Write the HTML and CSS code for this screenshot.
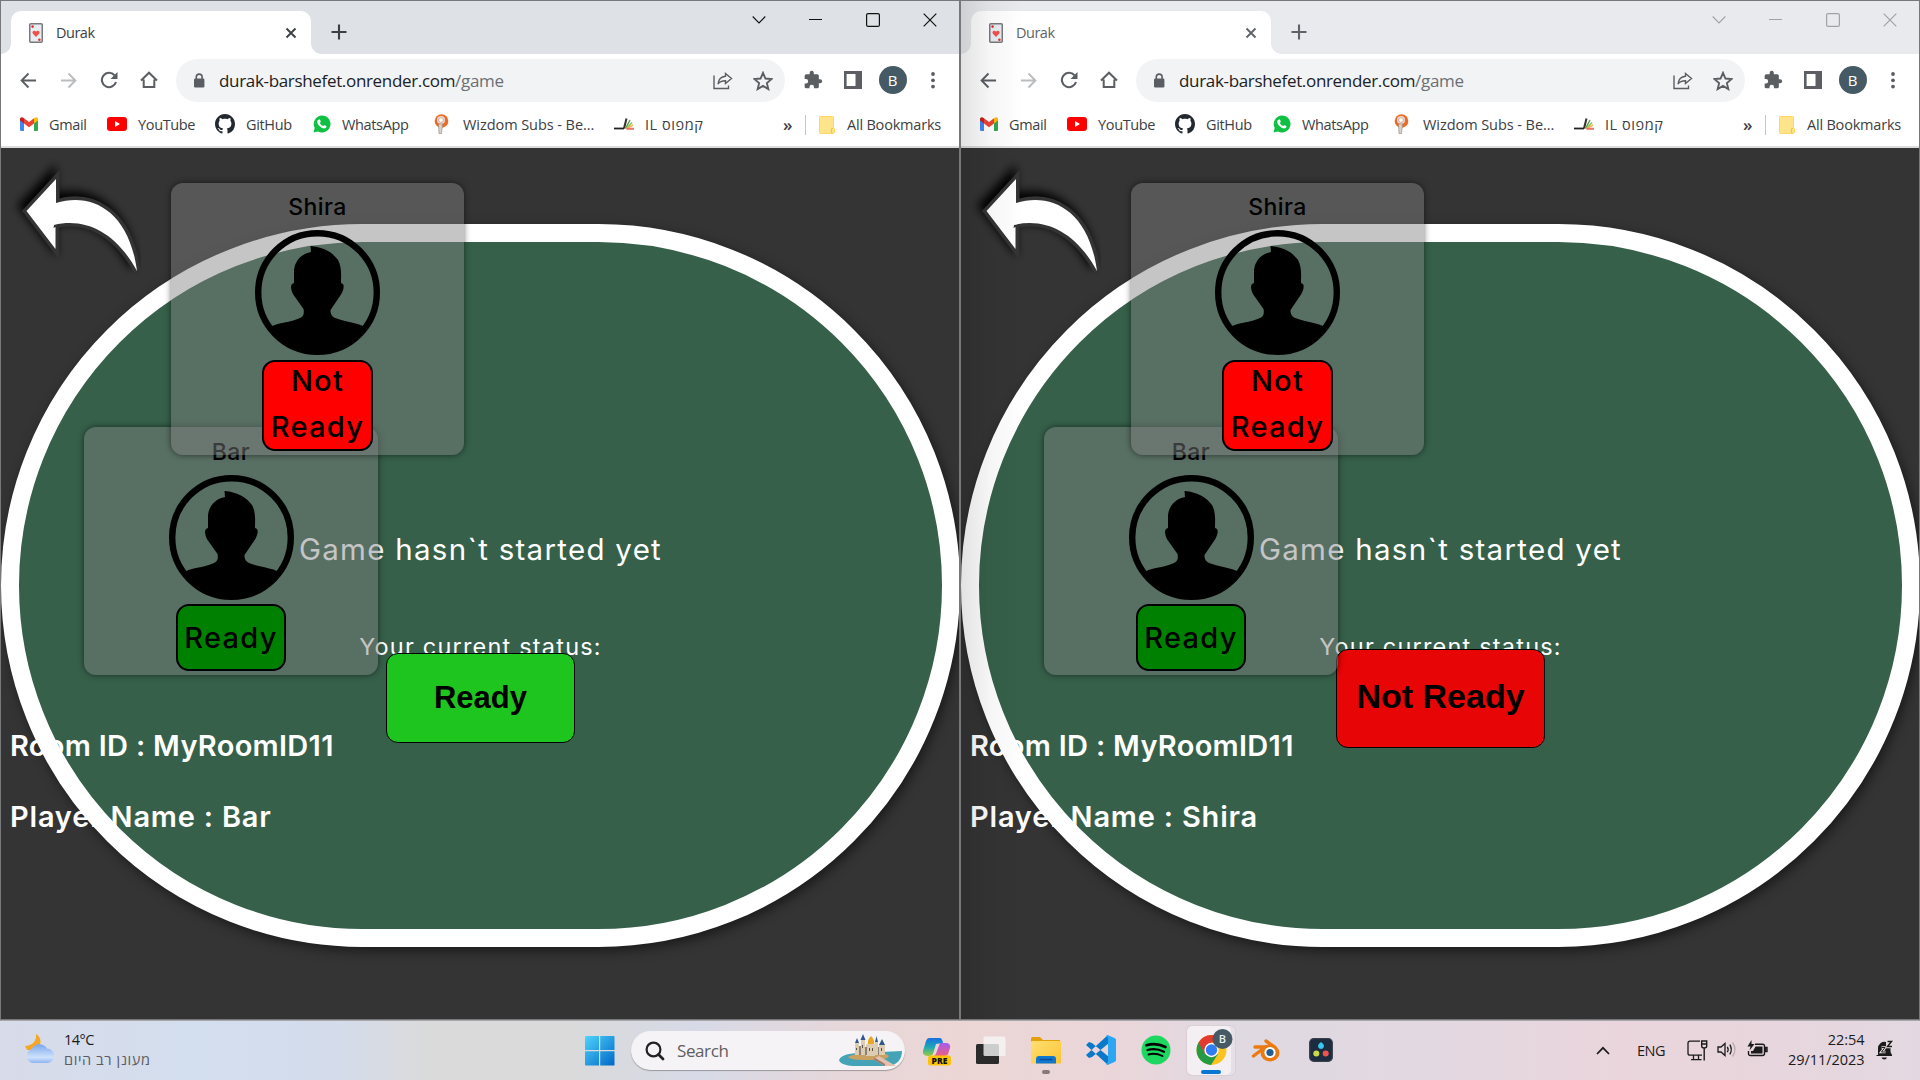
FILE: index.html
```html
<!DOCTYPE html>
<html lang="en">
<head>
<meta charset="utf-8">
<title>Durak</title>
<link rel="stylesheet" href="styles.css">
</head>
<body>
<svg class="defs" aria-hidden="true">
  <defs>
    <filter id="soft" x="-30%" y="-30%" width="160%" height="160%"><feGaussianBlur stdDeviation="5"/></filter>
    <linearGradient id="win" x1="0" y1="0" x2="1" y2="1"><stop offset="0" stop-color="#4fd3fb"/><stop offset="1" stop-color="#0067c8"/></linearGradient>
    <linearGradient id="cloudg" x1="0" y1="0" x2="0" y2="1"><stop offset="0" stop-color="#7ba7ef"/><stop offset=".7" stop-color="#cfe2fb"/><stop offset="1" stop-color="#8fb4f2"/></linearGradient>
    <linearGradient id="foldg" x1="0" y1="0" x2="1" y2="1"><stop offset="0" stop-color="#ffdf74"/><stop offset="1" stop-color="#fcc431"/></linearGradient>
    <linearGradient id="copa" x1="0" y1="0" x2="0" y2="1"><stop offset="0" stop-color="#1b6fe0"/><stop offset=".5" stop-color="#1aa6b8"/><stop offset="1" stop-color="#9ccb3b"/></linearGradient>
    <linearGradient id="copb" x1="0" y1="0" x2="0" y2="1"><stop offset="0" stop-color="#a45bf0"/><stop offset="1" stop-color="#f0607e"/></linearGradient>
  </defs>
  <symbol id="card" viewBox="0 0 14 20"><rect x=".75" y=".75" width="12.5" height="18.5" rx="1" fill="#e8edf2" stroke="#77797c" stroke-width="1.5"/><path d="M7 14 3.7 10.6A1.9 1.9 0 0 1 7 8.700a1.900 1.900 0 0 1 3.300 1.900Z" fill="#f0504c"/><circle cx="3.600" cy="3.600" r="1.300" fill="#d33"/><circle cx="10.400" cy="16.800" r="1.300" fill="#d33"/></symbol>
  <symbol id="x" viewBox="0 0 12 12"><path d="M1.500 1.500 10.500 10.500M10.500 1.500 1.500 10.500" stroke="currentColor" stroke-width="1.900" fill="none"/></symbol>
  <symbol id="plus" viewBox="0 0 16 16"><path d="M8 .5V15.500M.5 8H15.500" stroke="currentColor" stroke-width="2.100"/></symbol>
  <symbol id="back" viewBox="0 0 18 18"><path d="M17 9H2M9 1.600 1.700 9 9 16.400" fill="none" stroke="currentColor" stroke-width="2"/></symbol>
  <symbol id="reload" viewBox="0 0 18 18"><path d="M14.500 4.200A7.200 7.200 0 1 0 16 11" fill="none" stroke="currentColor" stroke-width="2.100"/><path d="M17.500 1v7h-7Z" fill="currentColor"/></symbol>
  <symbol id="home" viewBox="0 0 18 18"><path d="M3.700 8.500V16H14.300V8.500M1 9.500 9 1.700 17 9.500" fill="none" stroke="currentColor" stroke-width="2"/></symbol>
  <symbol id="lock" viewBox="0 0 12 16"><rect x="1" y="5.500" width="10.400" height="9" rx="1.200" fill="currentColor"/><path d="M3.300 6V4a2.900 2.900 0 0 1 5.800 0v2" fill="none" stroke="currentColor" stroke-width="1.600"/></symbol>
  <symbol id="share" viewBox="0 0 20 18"><path d="M1 3.500V16.500H15.500V13.500M12.500 1.500 18.500 6.500 12.500 11.500V8.800C8.500 8.800 6.300 10 5 12 5.400 7.800 8 4.800 12.500 4.300Z" fill="none" stroke="currentColor" stroke-width="1.400"/></symbol>
  <symbol id="star" viewBox="0 0 18 18"><path d="M9 1.700 11.200 6.800 16.700 7.300 12.500 10.900 13.800 16.300 9 13.400 4.200 16.300 5.500 10.900 1.300 7.300 6.800 6.800Z" fill="none" stroke="currentColor" stroke-width="1.700"/></symbol>
  <symbol id="puzzle" viewBox="0 0 24 24"><path d="M20.500 11H19V7a2 2 0 0 0-2-2h-4V3.500a2.500 2.500 0 0 0-5 0V5H4a2 2 0 0 0-2 2v3.800h1.500a2.700 2.700 0 0 1 0 5.400H2V20a2 2 0 0 0 2 2h3.800v-1.500a2.700 2.700 0 0 1 5.400 0V22H17a2 2 0 0 0 2-2v-4h1.500a2.500 2.500 0 0 0 0-5Z" fill="currentColor"/></symbol>
  <symbol id="side" viewBox="0 0 18 18"><path d="M0 0H18V18H0ZM2.600 3V15H11.500V3Z" fill="currentColor" fill-rule="evenodd"/></symbol>
  <symbol id="dots" viewBox="0 0 6 18"><circle cx="3" cy="3" r="1.900" fill="currentColor"/><circle cx="3" cy="9.300" r="1.900" fill="currentColor"/><circle cx="3" cy="15.600" r="1.900" fill="currentColor"/></symbol>
  <symbol id="w-down" viewBox="0 0 14 14"><path d="M.7 3.500 7 10 13.300 3.500" fill="none" stroke="currentColor" stroke-width="1.100"/></symbol>
  <symbol id="w-min" viewBox="0 0 14 14"><path d="M0 6.500H13" stroke="currentColor"/></symbol>
  <symbol id="w-max" viewBox="0 0 14 14"><rect x=".6" y=".6" width="12.800" height="12.800" rx="1.500" fill="none" stroke="currentColor" stroke-width="1.200"/></symbol>
  <symbol id="w-close" viewBox="0 0 14 14"><path d="M.7.7 13.300 13.300M13.300.7.7 13.300" stroke="currentColor" stroke-width="1.200"/></symbol>
  <symbol id="gmail" viewBox="0 0 18 14"><path d="M0 2V12.800Q0 14 1.200 14H4V6Z" fill="#4285f4"/><path d="M18 2V12.800Q18 14 16.800 14H14V6Z" fill="#34a853"/><path d="M14 1.300V6.500L18 3.500V2C18 0 15.800-.6 14 1.300Z" fill="#fbbc04"/><path d="M4 6.500V1.300L9 5 14 1.300V6.500L9 10.300Z" fill="#ea4335"/><path d="M0 2V3.500L4 6.500V1.300C2.200-.6 0 0 0 2Z" fill="#c5221f"/></symbol>
  <symbol id="yt" viewBox="0 0 20 14"><rect width="20" height="14" rx="3" fill="#f00"/><path d="M8 4V10L13 7Z" fill="#fff"/></symbol>
  <symbol id="gh" viewBox="0 0 16 16"><path fill="#24292f" d="M8 0C3.580 0 0 3.580 0 8c0 3.540 2.290 6.530 5.470 7.590.4.070.55-.17.55-.38 0-.19-.01-.82-.01-1.490-2.010.37-2.530-.49-2.690-.94-.09-.23-.48-.94-.82-1.130-.28-.15-.68-.52-.01-.53.63-.01 1.080.58 1.230.82.72 1.210 1.870.87 2.330.66.070-.52.28-.87.51-1.070-1.780-.2-3.640-.89-3.640-3.950 0-.87.31-1.590.82-2.150-.08-.2-.36-1.020.08-2.120 0 0 .67-.21 2.200.82.64-.18 1.320-.27 2-.27s1.360.09 2 .27c1.530-1.040 2.200-.82 2.200-.82.44 1.100.16 1.920.08 2.120.51.56.82 1.270.82 2.150 0 3.070-1.870 3.750-3.650 3.950.29.25.54.73.54 1.480 0 1.070-.01 1.930-.01 2.200 0 .21.15.46.55.38A8.010 8.010 0 0 0 16 8c0-4.420-3.580-8-8-8Z"/></symbol>
  <symbol id="wa" viewBox="0 0 18 18"><path d="M9 .5a8.500 8.500 0 1 1-4 16L.5 17.600 1.700 13A8.500 8.500 0 0 1 9 .5Z" fill="#0fc143"/><path d="M6 4.600c.5-.2.900-.1 1.100.4l.7 1.600c0 .5-.6.900-.9 1.300.7 1.500 1.800 2.500 3.300 3.200.4-.3.800-1.100 1.300-.9l1.700.8c.6.600.1 1.700-.6 2.100-2.800 1.600-8.600-3-8.400-6.600.1-.8.900-1.700 1.800-1.900Z" fill="#fff"/></symbol>
  <symbol id="wiz" viewBox="0 0 16 20"><circle cx="8.500" cy="7" r="6.800" fill="#f06a25"/><circle cx="8" cy="6" r="4" fill="#eadbd2"/><circle cx="8" cy="6" r="2.400" fill="#fff" stroke="#b98" stroke-width=".7"/><path d="M5.500 10h4l-1 9.500H6Z" fill="#d9d4cf" stroke="#8b7f78" stroke-width=".6"/></symbol>
  <symbol id="campus" viewBox="0 0 20 12"><path d="M0 10.500H10" stroke="#222" stroke-width="1.800"/><path d="M10 10.500 12.500.5" stroke="#333" stroke-width="2"/><path d="M11.500 10.500 16 2" stroke="#5b9a50" stroke-width="1.500"/><path d="M12 10.700 18 4.500" stroke="#8cc152" stroke-width="1.500"/><path d="M12.500 10.700 19 7" stroke="#f5b24a" stroke-width="1.500"/><path d="M12.500 10.800H20" stroke="#f0706a" stroke-width="2"/></symbol>
  <symbol id="fold" viewBox="0 0 16 18"><path d="M1.500.5H13.500Q14.500.5 14.500 1.500V12L15.500 13V16.500L14.500 17.500H1.500Q.5 17.500.5 16.500V1.500Q.5.5 1.500.5Z" fill="#ffe48a" stroke="#fad75f"/><path d="M12.500 17V12.500H14" fill="none" stroke="#f3c93c"/></symbol>
  <symbol id="person" viewBox="0 0 125 125"><circle cx="62.500" cy="62.500" r="59.300" fill="none" stroke="#000" stroke-width="6.400"/><path d="M55.500 16C69 17 78 23 83 30 87 37 86 46 86 53 91 54 88 62 85 66L75.500 80Q75 86 80 88C90 92 104 93 110 97A58 58 0 0 1 15 97C24 92 35 93 45 88Q50 86 48.500 79L40 67C36 62 34 54 39 53V40C40 31 46 24 56 22Z" fill="#000"/></symbol>
  <symbol id="arrow" viewBox="0 0 140 140"><path d="M25.500 63 55 31V55C90 44 128 62 136 123 116 86 86 69 53 79.500L55 101Z" fill="#000" filter="url(#soft)" transform="translate(-4 -5)" stroke="#000" stroke-width="8"/><path d="M25.500 63 55 31V55C90 44 128 62 136 123 116 86 86 69 53 77L52.500 80 54.500 79V101Z" fill="#fff" stroke="#343434" stroke-width="7" paint-order="stroke"/></symbol>
</svg>

<main class="desktop">
  <section class="window">
    <header class="tabstrip">
      <div class="tab"><svg width="14" height="20"><use href="#card"/></svg><span class="tab-title">Durak</span><svg class="tab-x" width="12" height="12"><use href="#x"/></svg></div>
      <svg class="newtab" width="16" height="16"><use href="#plus"/></svg>
      <div class="controls"><svg><use href="#w-down"/></svg><svg><use href="#w-min"/></svg><svg><use href="#w-max"/></svg><svg><use href="#w-close"/></svg></div>
    </header>
    <nav class="toolbar">
      <i><svg width="17" height="17"><use href="#back"/></svg></i>
      <i class="off"><svg class="flip" width="17" height="17"><use href="#back"/></svg></i>
      <i><svg width="18" height="18"><use href="#reload"/></svg></i>
      <i><svg width="18" height="18"><use href="#home"/></svg></i>
      <div class="omnibox"><svg width="12" height="16"><use href="#lock"/></svg><span class="url">durak-barshefet.onrender.com<em>/game</em></span><svg class="share" width="20" height="18"><use href="#share"/></svg><svg width="20" height="20"><use href="#star"/></svg></div>
      <i><svg width="20" height="20"><use href="#puzzle"/></svg></i>
      <i><svg width="18" height="18"><use href="#side"/></svg></i>
      <i><b class="avatar">B</b></i>
      <i><svg width="6" height="18"><use href="#dots"/></svg></i>
    </nav>
    <nav class="bookmarks">
      <a><svg width="18" height="14"><use href="#gmail"/></svg><span>Gmail</span></a>
      <a><svg width="20" height="14"><use href="#yt"/></svg><span>YouTube</span></a>
      <a><svg width="20" height="20"><use href="#gh"/></svg><span>GitHub</span></a>
      <a><svg width="18" height="18"><use href="#wa"/></svg><span>WhatsApp</span></a>
      <a><svg width="16" height="20"><use href="#wiz"/></svg><span class="wz">Wizdom Subs - Be...</span></a>
      <a><svg width="20" height="12"><use href="#campus"/></svg><span class="he">IL קמפוס</span></a>
      <a class="more">»</a>
      <a class="all"><svg width="16" height="18"><use href="#fold"/></svg><span class="ab">All Bookmarks</span></a>
    </nav>
    <div class="page">
      <svg class="arrow" width="140" height="140"><use href="#arrow"/></svg>
      <div class="table">
        <p class="state"><span>Game hasn`t started yet</span></p>
        <p class="status"><span>Your current status:</span></p>
        <button class="toggle ready"><span>Ready</span></button>
      </div>
      <div class="info"><p class="room"><span>Room ID : MyRoomID11</span></p><p class="pname"><span>Player Name : Bar</span></p></div>
      <article class="player bar"><h2><span>Bar</span></h2><svg width="125" height="125"><use href="#person"/></svg><div class="badge ok"><span>Ready</span></div></article>
      <article class="player shira"><h2><span>Shira</span></h2><svg width="125" height="125"><use href="#person"/></svg><div class="badge no"><span>Not<br>Ready</span></div></article>
    </div>
  </section>
  <section class="window inactive">
    <header class="tabstrip">
      <div class="tab"><svg width="14" height="20"><use href="#card"/></svg><span class="tab-title">Durak</span><svg class="tab-x" width="12" height="12"><use href="#x"/></svg></div>
      <svg class="newtab" width="16" height="16"><use href="#plus"/></svg>
      <div class="controls"><svg><use href="#w-down"/></svg><svg><use href="#w-min"/></svg><svg><use href="#w-max"/></svg><svg><use href="#w-close"/></svg></div>
    </header>
    <nav class="toolbar">
      <i><svg width="17" height="17"><use href="#back"/></svg></i>
      <i class="off"><svg class="flip" width="17" height="17"><use href="#back"/></svg></i>
      <i><svg width="18" height="18"><use href="#reload"/></svg></i>
      <i><svg width="18" height="18"><use href="#home"/></svg></i>
      <div class="omnibox"><svg width="12" height="16"><use href="#lock"/></svg><span class="url">durak-barshefet.onrender.com<em>/game</em></span><svg class="share" width="20" height="18"><use href="#share"/></svg><svg width="20" height="20"><use href="#star"/></svg></div>
      <i><svg width="20" height="20"><use href="#puzzle"/></svg></i>
      <i><svg width="18" height="18"><use href="#side"/></svg></i>
      <i><b class="avatar">B</b></i>
      <i><svg width="6" height="18"><use href="#dots"/></svg></i>
    </nav>
    <nav class="bookmarks">
      <a><svg width="18" height="14"><use href="#gmail"/></svg><span>Gmail</span></a>
      <a><svg width="20" height="14"><use href="#yt"/></svg><span>YouTube</span></a>
      <a><svg width="20" height="20"><use href="#gh"/></svg><span>GitHub</span></a>
      <a><svg width="18" height="18"><use href="#wa"/></svg><span>WhatsApp</span></a>
      <a><svg width="16" height="20"><use href="#wiz"/></svg><span class="wz">Wizdom Subs - Be...</span></a>
      <a><svg width="20" height="12"><use href="#campus"/></svg><span class="he">IL קמפוס</span></a>
      <a class="more">»</a>
      <a class="all"><svg width="16" height="18"><use href="#fold"/></svg><span class="ab">All Bookmarks</span></a>
    </nav>
    <div class="page">
      <svg class="arrow" width="140" height="140"><use href="#arrow"/></svg>
      <div class="table">
        <p class="state"><span>Game hasn`t started yet</span></p>
        <p class="status"><span>Your current status:</span></p>
        <button class="toggle notready"><span>Not Ready</span></button>
      </div>
      <div class="info"><p class="room"><span>Room ID : MyRoomID11</span></p><p class="pname"><span>Player Name : Shira</span></p></div>
      <article class="player bar"><h2><span>Bar</span></h2><svg width="125" height="125"><use href="#person"/></svg><div class="badge ok"><span>Ready</span></div></article>
      <article class="player shira"><h2><span>Shira</span></h2><svg width="125" height="125"><use href="#person"/></svg><div class="badge no"><span>Not<br>Ready</span></div></article>
    </div>
  </section>
</main>

<footer class="taskbar">
  <div class="weather">
    <svg width="32" height="30" viewBox="0 0 32 30"><path d="M12 0C18 3 18 12 12 16H3L1 12C8 12 13 7 12 0Z" fill="#f5a623"/><path d="M8 29A7.500 7.500 0 0 1 7.500 15 9 9 0 0 1 23 14.500 7.300 7.300 0 0 1 24 29Z" fill="url(#cloudg)"/></svg>
    <p><span class="deg">14°C</span><span class="fc" dir="rtl">מעונן רב היום</span></p>
  </div>
  <div class="apps">
    <svg class="start" width="30" height="30" viewBox="0 0 30 30"><path d="M1 0H14V14H0V1ZM15.200 0H29L29.500 1V14H15.200ZM0 15.200H14V29.500H1L0 29ZM15.200 15.200H29.500V29L29 29.500H15.200Z" fill="url(#win)"/></svg>
    <div class="search">
      <svg width="20" height="20" viewBox="0 0 20 20"><circle cx="8.500" cy="8.500" r="6.900" fill="none" stroke="#222" stroke-width="2.200"/><path d="M13.500 13.500 18 18" stroke="#222" stroke-width="2.800" stroke-linecap="round"/></svg>
      <span>Search</span>
      <svg class="castle" width="64" height="32" viewBox="0 0 64 32"><path d="M0 25C2 19 14 18 22 18L63 16C63 24 58 31 48 31H18C8 31 1 29 0 25Z" fill="#45a3b8"/><path d="M9 22C16 17 45 17 49 20 52 23 44 25 32 25S12 25 9 22Z" fill="#c9a262"/><path d="M16 8H20V20H16ZM22 3H26V20H22ZM27 9H36V21H27ZM36 7H39V20H36ZM40 9H46V20H40Z" fill="#dccdb2"/><path d="M18 3 20 8H16ZM24-1 26.500 5H21.500ZM37.500 1 39 7H36ZM43 4 46 10H40Z" fill="#31588a"/><path d="M32 1Q36 5 35 9H29Q28 5 32 1Z" fill="#e9a820"/><path d="M20 11H22V20H20ZM26 12H28V20H26ZM39 12H40V20H39Z" fill="#8c7f74"/><path d="M17 13h1v2h-1ZM23 10h1v3h-1ZM30 13h1v3h-1ZM33 13h1v3h-1ZM42 13h1v3h-1Z" fill="#5b5148"/><path d="M34 24 40 21 57 31H46Z" fill="#e3c0ad"/><path d="M34 24 46 31V29L36 23Z" fill="#9c7564"/></svg>
    </div>
    <svg class="a1" width="30" height="30" viewBox="0 0 30 30"><path d="M7 2H18Q20 2 21 7L14 8 11 18Q10 20 5 20 0 19 1 15L4 5Q5 2 7 2Z" fill="url(#copa)"/><path d="M18 7H25Q29 8 28 12L26 18Q25 20 21 20H12Q14 19 15 15Z" fill="url(#copb)"/><rect x="6" y="19.500" width="23" height="10" rx="2.500" fill="#fdc30b"/><text x="17.500" y="27.500" text-anchor="middle" class="pre">PRE</text></svg>
    <svg class="a2" width="30" height="30" viewBox="0 0 30 30"><rect x="0" y="8" width="23" height="20" rx="1.500" fill="#2b2b2b"/><rect x="7.500" y=".5" width="22" height="19.500" rx="1.500" fill="#f6f6f6" fill-opacity=".8"/></svg>
    <svg class="a3" width="32" height="38" viewBox="0 0 32 38"><path d="M1 2.500Q1 1 2.500 1H10L13 4H30V10H1Z" fill="#e3a00b"/><rect x="1" y="5" width="30" height="22.500" rx="1.200" fill="url(#foldg)"/><path d="M6 27.500V23Q6 20 9 20H23Q26 20 26 23V27.500Z" fill="#1277cf"/><path d="M9.500 23.500H22.500" stroke="#0a4e94" stroke-width="1.500"/><rect x="12" y="34" width="8" height="4" rx="2" fill="#85797c"/></svg>
    <svg class="a4" width="30" height="30" viewBox="0 0 30 30"><path d="M22 0 0 20 3 23 6 22 23 8ZM0 10 3 7 6 8 23 22 22 30Z" fill="#0b79c9"/><path d="M21.500 0 29 3.200Q30 3.800 30 5V25Q30 26.200 29 26.800L21.500 30 20 29Q22 28 22 26V4Q22 2 20 1Z" fill="#2aa6f2"/></svg>
    <svg class="a5" width="30" height="30" viewBox="0 0 30 30"><circle cx="15" cy="15" r="14.500" fill="#1ed760"/><path d="M5.500 10.300Q15 7.500 24.500 12" fill="none" stroke="#000" stroke-width="2.700" stroke-linecap="round"/><path d="M6.500 15Q15 12.800 23 16.700" fill="none" stroke="#000" stroke-width="2.300" stroke-linecap="round"/><path d="M7.500 19.500Q14.500 17.600 21.500 21" fill="none" stroke="#000" stroke-width="1.900" stroke-linecap="round"/></svg>
    <div class="active"><svg width="44" height="48" viewBox="0 0 44 48"><circle cx="24.500" cy="24" r="15" fill="#fcc31e"/><path d="M24.500 24 11.500 16.500A15 15 0 0 0 24 39L31 28Z" fill="#259a45"/><path d="M11.500 16.500A15 15 0 0 1 37.500 16.500H24.500V24L18 28Z" fill="#e23b2e"/><circle cx="24.500" cy="24" r="7.200" fill="#fff"/><circle cx="24.500" cy="24" r="5.700" fill="#2f7df0"/><circle cx="35.500" cy="13" r="10" fill="#455a64"/><text x="35.500" y="17.200" text-anchor="middle" class="bb">B</text><rect x="14" y="44" width="20" height="4" rx="2" fill="#0877d3"/></svg></div>
    <svg class="a6" width="28" height="24" viewBox="0 0 28 24"><path d="M14 2 23 8.500M3 8H17M1.500 17 14 7.500" stroke="#ea7b12" stroke-width="3.400" stroke-linecap="round"/><ellipse cx="18" cy="14" rx="9.500" ry="8.500" fill="#ea7b12"/><circle cx="18" cy="13.500" r="5.600" fill="#fff"/><circle cx="18" cy="13.500" r="3.600" fill="#235b93"/></svg>
    <svg class="a7" width="24" height="24" viewBox="0 0 24 24"><rect x=".7" y=".7" width="22.600" height="22.600" rx="4" fill="#1c2b3e" stroke="#3a3f4c" stroke-width="1.300"/><path d="M12 4Q16 7 13.500 10.500H10.500Q8 7 12 4Z" fill="#35c8f0"/><circle cx="12" cy="8" r="2.800" fill="#35c8f0"/><circle cx="7.300" cy="15.500" r="3" fill="#c8d94a"/><circle cx="16.700" cy="15.500" r="3" fill="#ee5350"/></svg>
  </div>
  <div class="tray">
    <svg class="chev" width="14" height="9" viewBox="0 0 14 9"><path d="M1 8 7 1.800 13 8" fill="none" stroke="#1b1b1b" stroke-width="1.700"/></svg>
    <span class="eng">ENG</span>
    <svg class="net" width="21" height="21" viewBox="0 0 21 21"><path d="M13 1.200H3Q1 1.200 1 3.200V13.200Q1 15.200 3 15.200H15M6.500 15.500V19.500M11.500 15.500V19.500M4 19.600H14.500" fill="none" stroke="#1b1b1b" stroke-width="1.300"/><path d="M14.700 1H19.700V6Q19.700 8 17.200 8T14.700 6ZM14.700 4H19.700M17.200 8V20.500" fill="none" stroke="#1b1b1b" stroke-width="1.400"/></svg>
    <svg class="vol" width="20" height="17" viewBox="0 0 20 17"><path d="M1 6H4L8 2.500V14.500L4 11H1Z" fill="none" stroke="#1b1b1b" stroke-width="1.300"/><path d="M10.300 5.800Q12 8.500 10.300 11.200M12.800 3.600Q15.800 8.500 12.800 13.400" fill="none" stroke="#1b1b1b" stroke-width="1.300"/><path d="M15.500 1.500Q20.500 8.500 15.500 15.500" fill="none" stroke="#b9a9ae" stroke-width="1.300"/></svg>
    <svg class="bat" width="21" height="17" viewBox="0 0 21 17"><path d="M8 4.200H15.500Q17.500 4.200 17.500 6.200V13.500Q17.500 15.500 15.500 15.500H3.500Q1.500 15.500 1.500 13.500V11M18.500 7.500V11.500H20V7.500Z" fill="none" stroke="#1b1b1b" stroke-width="1.400"/><path d="M8.500 6.500H15.500V13.500H4V11H6Z" fill="#1b1b1b"/><path d="M4.500 0 .5 6.500H3.500L2.500 10.500 7.500 4H4.500Z" fill="#1b1b1b"/></svg>
    <p><span class="time">22:54</span><span class="date">29/11/2023</span></p>
    <svg class="bell" width="17" height="20" viewBox="0 0 17 20"><path d="M2 15V8.500A6.500 6.500 0 0 1 10 2V8H14.500V12L16 15V16H.5V15Z" fill="#1b1b1b"/><path d="M5.500 17.500H11Q10.500 19.500 8.300 19.500T5.500 17.500Z" fill="#1b1b1b"/><path d="M5.500 7.500H9L5.500 12H9.500M11.500 2H15.500L11.500 7H16" fill="none" stroke="#f1e3e8" stroke-width="2.600"/><path d="M5.500 7.500H9L5.500 12H9.500" fill="none" stroke="#1b1b1b" stroke-width="1"/><path d="M11.500 1.500H15.500L11.500 6.500H16" fill="none" stroke="#1b1b1b" stroke-width="1.500"/></svg>
  </div>
</footer>
</body>
</html>
```
FILE: styles.css
```css
* { box-sizing: border-box; }
body { margin: 0; width: 1920px; height: 1080px; overflow: hidden; display: flex; flex-direction: column; font-family: "Open Sans", "Noto Sans", "Liberation Sans", sans-serif; background: #343434; }
p, h2 { margin: 0; }
svg { display: block; flex: none; overflow: visible; }
.defs { position: absolute; width: 0; height: 0; }

.desktop { display: flex; height: 1020px; }
.window { position: relative; width: 960px; height: 1020px; border: 1px solid #77787a; background: #fff; display: flex; flex-direction: column; overflow: hidden; }
.inactive::after { content: ""; position: absolute; inset: 0 auto 0 0; width: 62px; background: linear-gradient(90deg, rgba(0,0,0,.11), rgba(0,0,0,.04) 45%, transparent); }

.tabstrip { height: 53px; background: #dee1e6; display: flex; align-items: flex-start; color: #3c4043; }
.tab { position: relative; width: 300px; height: 43px; margin: 10px 0 0 10px; padding: 0 14px 0 18px; background: #fff; border-radius: 10px 10px 0 0; display: flex; align-items: center; }
.tab::before, .tab::after { content: ""; position: absolute; bottom: 0; width: 10px; height: 10px; }
.tab::before { left: -10px; background: radial-gradient(circle at 0 0, transparent 9.5px, #fff 10px); }
.tab::after { right: -10px; background: radial-gradient(circle at 100% 0, transparent 9.5px, #fff 10px); }
.tab-title { flex: 1; margin-left: 13px; font-size: 14.500px; letter-spacing: -.5px; }
.newtab { margin: 23px 0 0 20px; color: #3c4043; }
.controls { display: flex; margin: 12px 0 0 auto; color: #111; }
.controls svg { width: 14px; height: 14px; margin: 0 22px 0 21px; }
.inactive .tabstrip { background: #e8eaed; color: #5f6368; }
.inactive .newtab { color: #5f6368; }
.inactive .controls { color: #a0a2a5; }

.toolbar { height: 53px; padding: 0 0 1px 7.500px; display: flex; align-items: center; color: #5a5e63; }
.toolbar i { width: 40px; height: 40px; display: flex; align-items: center; justify-content: center; font-style: normal; }
.off { color: #babcbe; }
.flip { transform: scaleX(-1); }
.omnibox { width: 609px; height: 43px; margin: 1px 7.500px 0 7.500px; padding: 0 12.500px 0 16.500px; border-radius: 22px; background: #f1f3f4; display: flex; align-items: center; }
.url { margin-left: 14.500px; font-size: 17px; letter-spacing: -.33px; color: #202124; }
.url em { font-style: normal; color: #6b6f74; }
.share { margin: 0 20px 0 auto; }
.avatar { width: 28px; height: 28px; border-radius: 50%; background: #455a64; color: #fff; font: 500 15px/28px "Open Sans", sans-serif; text-align: center; }

.bookmarks { height: 41px; padding-left: 19px; border-bottom: 2px solid #dcdcdc; display: grid; grid-template-columns: 87px 108px 98px 120px 181px 169px 22px 1fr; align-items: center; font-size: 14.500px; letter-spacing: -.35px; color: #3c4043; }
.bookmarks a { display: flex; align-items: center; gap: 11px; height: 36px; padding-bottom: 5px; white-space: nowrap; }
.wz { margin-left: 3px; letter-spacing: -.06px; }
.he { letter-spacing: .55px; }
.more { font-size: 17px; font-weight: 600; }
.bookmarks .all { height: 20px; margin-bottom: 4px; border-left: 1px solid #c4c6c9; padding: 0 0 0 13px; }
.ab { margin-left: 1px; letter-spacing: -.2px; }

.page { position: relative; height: 871px; background: #343434; font-family: Inter, "Open Sans", sans-serif; color: #fff; padding-top: 76px; }
.page span { white-space: nowrap; }
.arrow { position: absolute; left: 0; top: 0; }
.table { width: 959px; height: 723px; border: 18px solid #fff; border-radius: 362px; background: #36604a; box-shadow: 3px 4px 12px rgba(0,0,0,.5); display: flex; flex-direction: column; align-items: center; }
.state { margin-top: 281px; font-size: 29.500px; letter-spacing: 1.280px; line-height: 52px; }
.status { margin-top: 52px; font-size: 23.500px; letter-spacing: 1.200px; line-height: 40px; }
.toggle { position: relative; width: 189px; height: 90px; margin-top: -14px; padding: 0 0 2px; border: 1px solid #000; border-radius: 12px; background: #1fc51f; font: bold 31px/1 "Liberation Sans", Arial, sans-serif; color: #000; }
.notready { width: 209px; height: 99px; margin-top: -18px; padding-bottom: 5px; background: #e80505; font-size: 34px; }
.info { position: absolute; left: 9px; top: 576px; font-size: 29px; font-weight: 600; letter-spacing: .8px; }
.room { letter-spacing: .3px; }
.info p { line-height: 43px; margin-bottom: 28px; }

.player { position: absolute; width: 293px; border-radius: 12px; background: rgba(128,128,128,.46); box-shadow: 0 0 6px rgba(0,0,0,.55); display: flex; flex-direction: column; align-items: center; color: #000; }
.player h2 { height: 47px; font-size: 23px; font-weight: 500; line-height: 49px; letter-spacing: .4px; }
.bar { left: 83px; top: 279px; width: 294px; height: 248px; }
.bar h2 { height: 48px; line-height: 50px; }
.shira { left: 170px; top: 35px; height: 272px; }
.badge { width: 111px; height: 91px; margin-top: 5px; border: 2px solid #000; border-radius: 13px; font-size: 29px; font-weight: 500; letter-spacing: 1.300px; line-height: 46px; text-align: center; display: flex; justify-content: center; align-items: center; }
.shira .badge { padding-bottom: 4px; }
.bar .badge { width: 110px; height: 67px; margin-top: 4px; }
.ok { background: #008000; }
.no { background: #f00; }

.taskbar { height: 60px; border-top: 1px solid #a9a6ab; display: flex; background: linear-gradient(90deg, #d8dbe9 0, #d3deee 190px, #d4dcec 330px, #dadada 430px, #dadada 560px, #d7dae7 700px, #e6d7da 840px, #ecd6d5 960px, #ead6da 1120px, #dfd9e2 1240px, #e2d8e1 1420px, #ead5dc 1620px, #e9d5dc 1720px, #e3d8e1 1920px); color: #1b1b1b; font-size: 14.500px; }
.weather { width: 584px; padding: 13px 0 0 24px; display: flex; gap: 8px; }
.weather p, .tray p { display: flex; flex-direction: column; line-height: 20px; }
.weather p { align-items: flex-start; margin-top: -4px; }
.deg { letter-spacing: -.5px; }
.fc { color: #5a5c62; letter-spacing: .6px; }
.apps { width: 1013px; display: flex; align-items: flex-start; }
.start { margin: 15px 0 0 1px; }
.search { width: 274px; height: 39px; margin: 10px 0 0 16px; padding: 0 2px 0 14px; border-radius: 20px; background: #f5f3f5; box-shadow: 0 1px 1px rgba(0,0,0,.3); display: flex; align-items: center; font-size: 17px; letter-spacing: -.4px; color: #5f5e60; }
.search span { margin-left: 12px; }
.castle { margin-left: auto; }
.pre { font: 800 8.500px "Open Sans", sans-serif; fill: #111; }
.bb { font: 600 11px "Open Sans", sans-serif; fill: #e8eef0; }
.a1 { margin: 15px 0 0 17px; }
.a2 { margin: 15px 0 0 24px; }
.a3 { margin: 15px 0 0 24px; }
.a4 { margin: 14px 0 0 24px; }
.a5 { margin: 14px 0 0 25px; }
.active { width: 48px; height: 49px; margin: 5px 0 0 16px; border-radius: 5px; background: rgba(250,247,249,.75); box-shadow: inset -4px 0 0 #e6dfe5, 0 0 1px rgba(0,0,0,.4); }
.a6 { margin: 18px 0 0 17px; }
.a7 { margin: 17px 0 0 29px; }
.tray { display: flex; align-items: flex-start; flex: 1; }
.chev { margin: 25px 0 0 -1px; }
.eng { margin: 20px 0 0 27px; letter-spacing: -.5px; }
.net { margin: 19px 0 0 22px; }
.vol { margin: 20px 0 0 9px; }
.bat { margin: 19px 0 0 10px; }
.tray p { margin: 9px 0 0 20px; align-items: flex-end; letter-spacing: -.05px; }
.bell { margin: 19px 0 0 11px; }
```
